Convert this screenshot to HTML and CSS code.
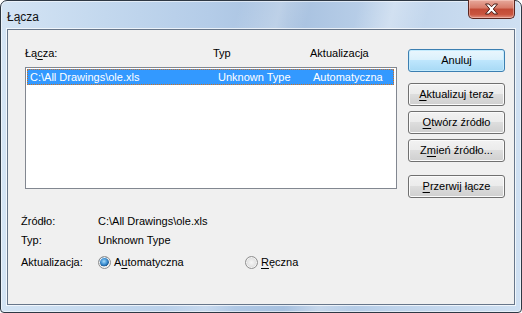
FILE: index.html
```html
<!DOCTYPE html>
<html lang="pl">
<head>
  <meta charset="UTF-8">
  <title>Łącza</title>
  <link rel="stylesheet" href="styles.css">
</head>
<body>
  <div class="window">
    <div class="titlebar">
      <span class="title">Łącza</span>
      <button class="close" aria-label="Zamknij">
        <svg width="15" height="12" viewBox="0 0 15 12">
          <path d="M1.5 1h3.4l2.6 2.8L10.1 1h3.4L9.3 6l4.2 5h-3.4L7.5 8.2 4.9 11H1.5l4.2-5z" fill="#fff" stroke="#4a1c16" stroke-width="1" stroke-linejoin="round"/>
        </svg>
      </button>
    </div>

    <div class="client">
      <div class="top">
        <div class="links">
          <div class="cols head">
            <span>Łą<u>c</u>za:</span>
            <span>Typ</span>
            <span>Aktualizacja</span>
          </div>
          <div class="listbox">
            <div class="cols row selected">
              <span>C:\All Drawings\ole.xls</span>
              <span>Unknown Type</span>
              <span>Automatyczna</span>
            </div>
          </div>
        </div>

        <div class="buttons">
          <button class="btn default">Anuluj</button>
          <button class="btn first"><u>A</u>ktualizuj teraz</button>
          <button class="btn"><u>O</u>twórz źródło</button>
          <button class="btn">Z<u>m</u>ień źródło...</button>
          <button class="btn last"><u>P</u>rzerwij łącze</button>
        </div>
      </div>

      <!-- Details of the selected link -->
      <div class="info">
        <div class="info-row">
          <span class="label">Źródło:</span>
          <span>C:\All Drawings\ole.xls</span>
        </div>
        <div class="info-row">
          <span class="label">Typ:</span>
          <span>Unknown Type</span>
        </div>
        <div class="info-row update">
          <span class="label">Aktualizacja:</span>
          <label class="radio auto"><span class="dot checked"></span><span>A<u>u</u>tomatyczna</span></label>
          <label class="radio"><span class="dot"></span><span><u>R</u>ęczna</span></label>
        </div>
      </div>
    </div>
  </div>
</body>
</html>
```

FILE: styles.css
```css
body {
  margin: 0;
  font-family: "Liberation Sans", Arial, sans-serif;
  font-size: 11px;
  line-height: 13px;
  color: #000;
  background: #fff;
}
u {
  text-decoration-thickness: 1px;
  text-underline-offset: 2px;
}
.window {
  width: 522px;
  height: 313px;
  box-sizing: border-box;
  border: 1px solid #2e3844;
  border-radius: 7px 7px 4px 4px;
  padding: 0 6px 7px;
  display: flex;
  flex-direction: column;
  background:
    linear-gradient(104deg, rgba(255,255,255,0) 40%, rgba(255,255,255,0.25) 47%, rgba(255,255,255,0) 52%, rgba(255,255,255,0) 60%, rgba(255,255,255,0.3) 66%, rgba(255,255,255,0) 72%),
    linear-gradient(90deg, #d4e4f4 0%, #c3d8ee 20%, #b4cce8 40%, #a6c0df 55%, #bed3eb 75%, #cfe0f2 100%);
  box-shadow: inset 0 0 0 1px rgba(255, 255, 255, 0.55);
}
.titlebar {
  height: 28px;
  display: flex;
  justify-content: space-between;
  align-items: flex-start;
}
.title {
  font-size: 12px;
  line-height: 14px;
  padding-top: 9px;
  color: #111;
}
.close {
  width: 47px;
  height: 19px;
  margin-top: -1px;
  padding: 0;
  border: 1px solid #5a2620;
  border-top: none;
  border-radius: 0 0 5px 5px;
  display: flex;
  align-items: center;
  justify-content: center;
  background: linear-gradient(#e7a99c 0%, #d77a68 45%, #c14a36 50%, #c9553f 80%, #e09080 100%);
  box-shadow: inset 0 0 0 1px rgba(255, 220, 210, 0.45);
}
.client {
  flex: 1;
  background: #f0f0f0;
  border: 1px solid #67768a;
  box-shadow: 0 0 0 1px rgba(255, 255, 255, 0.7);
  padding: 17px 9px 0 13px;
}
.top {
  display: flex;
}
.links {
  width: 372px;
  margin-left: 4px;
}
.cols {
  display: grid;
  grid-template-columns: 188px 97px 1fr;
  white-space: nowrap;
}
.listbox {
  margin-top: 7px;
  height: 122px;
  box-sizing: border-box;
  border: 1px solid #828790;
  background: #fff;
  padding: 1px 2px 1px 1px;
}
.row {
  height: 16px;
  box-sizing: border-box;
  padding: 1px 0 0 2px;
  grid-template-columns: 188px 95px 1fr;
}
.row.selected {
  background: #3399ff;
  color: #fff;
  border: 1px dotted #d07020;
}
.buttons {
  width: 97px;
  margin-left: 11px;
  padding-top: 2px;
  display: flex;
  flex-direction: column;
}
.btn {
  height: 23px;
  padding: 0;
  font: inherit;
  color: #000;
  border: 1px solid #707070;
  border-radius: 3px;
  background: linear-gradient(#f2f2f2 0%, #ebebeb 49%, #dddddd 50%, #cfcfcf 100%);
  box-shadow: inset 0 0 0 1px #fbfbfb;
  margin-top: 5px;
}
.btn.default {
  margin-top: 0;
  border-color: #3c7fb1;
  background: linear-gradient(#eaf6fd 0%, #d9f0fc 49%, #bee6fd 50%, #a7d9f5 100%);
  box-shadow: inset 0 0 0 1px #c4ebfd;
}
.btn.first {
  margin-top: 11px;
}
.btn.last {
  margin-top: 13px;
}
.info {
  margin-top: 17px;
  display: flex;
  flex-direction: column;
}
.info-row {
  display: flex;
  align-items: center;
  height: 13px;
  margin-bottom: 6px;
}
.info-row.update {
  margin-top: 3px;
}
.label {
  width: 77px;
}
.radio {
  display: flex;
  align-items: center;
  gap: 3px;
}
.radio.auto {
  width: 147px;
}
.dot {
  width: 13px;
  height: 13px;
  box-sizing: border-box;
  border-radius: 50%;
  border: 1px solid #8f8f8f;
  background: radial-gradient(circle at 50% 50%, #f6f6f6 0%, #e6e6e6 45%, #d4d4d4 70%, #f2f2f2 100%);
  box-shadow: inset 0 0 0 1px #f4f4f4;
}
.dot.checked {
  background:
    radial-gradient(circle at 45% 40%, #a8dcfa 0%, #3d8fd2 35%, #1c5a93 55%, rgba(0,0,0,0) 58%),
    radial-gradient(circle at 50% 50%, #f6f6f6 0%, #e6e6e6 60%, #f2f2f2 100%);
}
```
